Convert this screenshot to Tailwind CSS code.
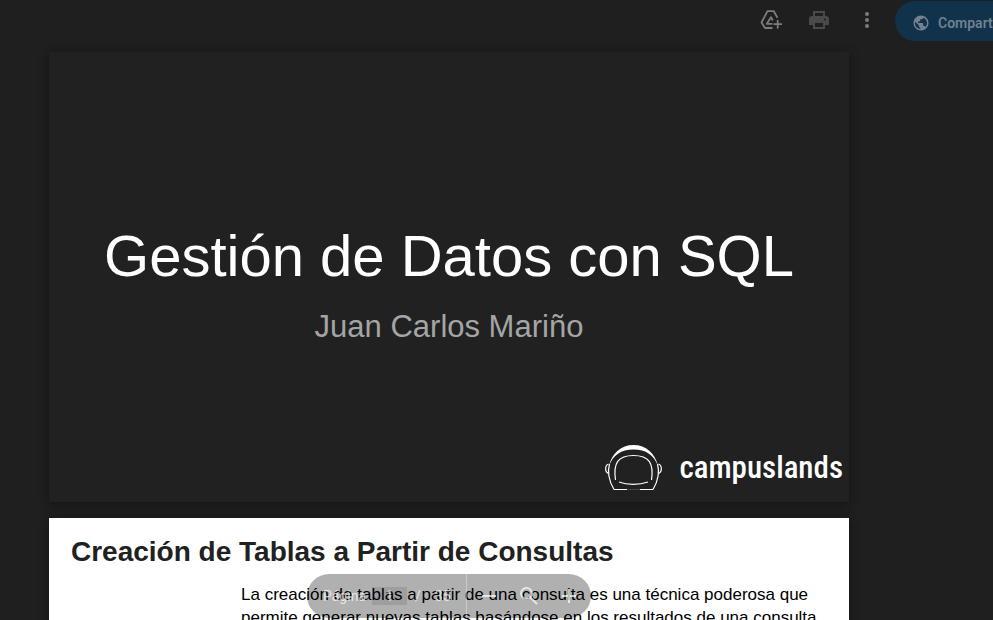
<!DOCTYPE html>
<html lang="es">
<head>
<meta charset="utf-8">
<meta name="viewport" content="width=device-width, initial-scale=1">
<title>Gestión de Datos con SQL</title>
<script src="https://cdn.jsdelivr.net/npm/@tailwindcss/browser@4"></script>
</head>
<body class="h-screen overflow-hidden bg-[#1f1f1f] font-['Liberation_Sans',Arial,sans-serif]">
<div class="flex h-full flex-col">
  <header class="flex h-[52px] shrink-0 items-start justify-end">
    <div class="flex h-10 items-center gap-6 pr-4">
      <button type="button" aria-label="Añadir a Drive" class="flex size-6 items-center justify-center text-[#7c7c7c]">
        <svg class="size-6" viewBox="0 0 24 24" fill="none" stroke="currentColor" stroke-width="1.800" stroke-linejoin="round"><path d="M13.500 20H6L2.500 14.500 8.500 3.200h6.300l3.700 6.600M13.500 15.800H7.800l4.200-6.500 1.800 3.200M18.700 12v8.500M14.500 16.200h8.500"/></svg>
      </button>
      <button type="button" aria-label="Imprimir" class="flex size-6 items-center justify-center text-[#4a4a4a]">
        <svg class="size-6" viewBox="0 0 24 24" fill="currentColor"><path fill-rule="evenodd" d="M6 3h12v5h1c1.700 0 3 1.300 3 3v6h-4v4H6v-4H2v-6c0-1.700 1.300-3 3-3h1zM8 5v3h8V5zm0 10v4h8v-4zm10-4.500a1 1 0 1 0 0 2 1 1 0 0 0 0-2z"/></svg>
      </button>
      <button type="button" aria-label="Más acciones" class="flex size-6 items-center justify-center text-[#7c7c7c]">
        <svg class="size-6" viewBox="0 0 24 24" fill="currentColor"><circle cx="12" cy="6" r="2"/><circle cx="12" cy="12" r="2"/><circle cx="12" cy="18" r="2"/></svg>
      </button>
    </div>
    <button type="button" class="mt-px flex h-10 w-[98px] items-center gap-2 overflow-hidden rounded-l-full bg-[#10324a] pt-1 pl-[17px] font-[Roboto,sans-serif] text-sm font-semibold whitespace-nowrap text-[#71828e]">
      <svg class="size-[18px] shrink-0" viewBox="0 0 24 24" fill="currentColor"><path d="M12 2C6.480 2 2 6.480 2 12s4.480 10 10 10 10-4.480 10-10S17.520 2 12 2zm-1 17.930c-3.950-.49-7-3.850-7-7.930 0-.62.080-1.210.210-1.790L9 15v1c0 1.100.9 2 2 2v1.930zm6.900-2.540c-.26-.81-1-1.390-1.900-1.390h-1v-3c0-.55-.45-1-1-1H8v-2h2c.55 0 1-.45 1-1V7h2c1.100 0 2-.9 2-2v-.41c2.930 1.190 5 4.060 5 7.410 0 2.080-.8 3.970-2.100 5.390z"/></svg>
      <span>Compartir</span>
    </button>
  </header>

  <main class="relative flex min-h-0 flex-1 flex-col gap-4 px-[49px]">
    <section class="flex aspect-video w-full max-w-[800px] shrink-0 flex-col items-center bg-[#212121] pt-[168px] shadow-[0_2px_10px_rgba(0,0,0,0.4)]">
      <h1 class="text-[58px] leading-[72px] whitespace-nowrap text-white">Gestión de Datos con SQL</h1>
      <p class="mt-[17px] text-[31px] leading-9 whitespace-nowrap text-[#a5a5a5]">Juan Carlos Mariño</p>
      <div class="mt-auto flex items-center gap-4 self-end pr-[6px] pb-[10px] text-white">
        <svg class="h-12 w-[60px]" viewBox="0 0 60 48" fill="none" stroke="currentColor">
          <path d="M6 22C9 9 18 1 30.500 1S52 9 55 22C51 11 43 5.500 30.500 5.500S10 11 6 22z" fill="currentColor" stroke="none"/>
          <path d="M6.500 20C4 29 6 37 11 45.500M54.500 20C57 29 55 37 50 45.500" stroke-width="1.200"/>
          <path d="M11 45.500h13M50 45.500H37" stroke-width="1.200"/>
          <path d="M24 45.500h13" stroke-width="1.200" stroke-opacity=".15"/>
          <path d="M5.500 20c-3.500 1-4 8 0 9.500M55.500 20c3.500 1 4 8 0 9.500" stroke-width="1.200"/>
          <path d="M12.500 36C10 19 15 11.500 30.500 11.500S51 19 48.500 36" stroke-width="1.200"/>
          <path d="M16 38c8 3.200 20 3.200 29 0" stroke-width="1.200"/>
        </svg>
        <span class="font-['Roboto_Condensed','Liberation_Sans_Narrow',sans-serif] text-[31px] leading-[48px] font-medium">campuslands</span>
      </div>
    </section>

    <section class="aspect-video w-full max-w-[800px] shrink-0 bg-white shadow-[0_2px_10px_rgba(0,0,0,0.4)]">
      <h2 class="px-[22px] pt-4 text-[28px] leading-9 font-bold text-[#212121]">Creación de Tablas a Partir de Consultas</h2>
      <p class="mt-[13px] pr-4 pl-48 text-[17px] leading-[23px] text-black">La creación de tablas a partir de una consulta es una técnica poderosa que permite generar nuevas tablas basándose en los resultados de una consulta</p>
    </section>

    <div class="absolute inset-x-[49px] bottom-[2px] flex max-w-[800px] justify-center">
      <div class="flex h-11 w-[284px] items-center rounded-full bg-black/31 font-[Roboto,sans-serif] text-sm text-white/70">
        <div class="flex h-full w-40 items-center border-r border-white/35 pl-4">
          <label for="page">Página</label>
          <input id="page" type="text" value="1" class="ml-[6px] h-[18px] w-[35px] bg-black/10 text-center outline-none">
          <span class="ml-2">/</span>
          <span class="ml-[14px]">35</span>
        </div>
        <div class="flex flex-1 items-center justify-center gap-4">
          <button type="button" aria-label="Alejar" class="flex size-6 items-center justify-center"><svg class="size-6" viewBox="0 0 24 24" fill="currentColor"><path d="M5 11h14v2H5z"/></svg></button>
          <button type="button" aria-label="Restablecer zoom" class="flex size-6 items-center justify-center"><svg class="size-6" viewBox="0 0 24 24" fill="none" stroke="currentColor" stroke-width="2"><circle cx="9.500" cy="9.500" r="5.500"/><path d="M13.500 13.500l6.500 6.500"/></svg></button>
          <button type="button" aria-label="Acercar" class="flex size-6 items-center justify-center"><svg class="size-6" viewBox="0 0 24 24" fill="currentColor"><path d="M5 11h6V5h2v6h6v2h-6v6h-2v-6H5z"/></svg></button>
        </div>
      </div>
    </div>
  </main>
</div>
</body>
</html>
